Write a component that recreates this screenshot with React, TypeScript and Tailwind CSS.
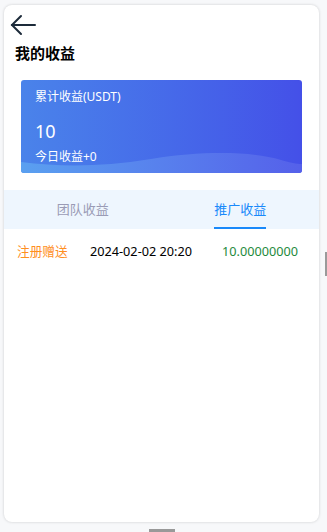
export default function App() {
  const tabs = ['团队收益', '推广收益']
  const active = 1

  return (
    <div
      className="relative w-[327px] h-[532px] bg-[#f7f8fa] overflow-hidden"
      style={{ fontFamily: '"Noto Sans", "Noto Sans CJK SC", sans-serif' }}
    >
      <div className="absolute left-[4px] top-[5px] w-[315px] h-[517px] bg-white rounded-[8px] shadow-[0_0_3px_rgba(0,0,0,0.18)] overflow-hidden">
        <div className="pl-[6px] pt-[9px] h-[32px]">
          <svg width="26" height="22" viewBox="0 0 26 22" fill="none" stroke="#1d2b3a" strokeWidth="2" strokeLinecap="round">
            <path d="M25 11H2" />
            <path d="M11 2L2 11L11 20" />
          </svg>
        </div>
        <div className="pl-[11px] pt-[6px] text-[15px] leading-[21px] font-bold text-black">我的收益</div>

        <div className="mx-[17px] mt-[16px] h-[93px] rounded-[3px] relative overflow-hidden bg-gradient-to-r from-[#4a83ea] to-[#4450e8]">
          <svg className="absolute left-0 bottom-0" width="282" height="30" viewBox="0 0 282 30" preserveAspectRatio="none">
            <defs>
              <linearGradient id="w" x1="0" x2="1" y1="0" y2="0">
                <stop offset="0" stopColor="#5aa0f0" />
                <stop offset="1" stopColor="#5560ea" />
              </linearGradient>
            </defs>
            <path d="M0 19 C40 24 80 24 130 16 C180 8 230 8 260 17 C270 20 276 21 282 21 V30 H0 Z" fill="url(#w)" />
          </svg>
          <div className="relative px-[14px] pt-[9px] text-white">
            <div className="text-[12px] leading-[16px]">累计收益(USDT)</div>
            <div className="mt-[15px] text-[18px] leading-[22px]">10</div>
            <div className="mt-[7px] text-[12px] leading-[16px]">今日收益+0</div>
          </div>
        </div>

        <div className="mt-[17px] h-[39px] bg-[#eef6fe] flex">
          {tabs.map((t, i) => (
            <div key={t} className="flex-1 flex justify-center">
              <div
                className={`relative h-full flex items-center text-[13px] ${
                  i === active ? 'text-[#1989fa]' : 'text-[#9a9bb5]'
                }`}
              >
                {t}
                {i === active && <div className="absolute left-0 right-0 bottom-0 h-[2px] bg-[#1989fa]" />}
              </div>
            </div>
          ))}
        </div>

        <div className="flex items-center h-[46px] text-[12.7px] pl-[13px] pr-[21px]">
          <div className="text-[#ff8f1f] w-[73px]">注册赠送</div>
          <div className="text-black">2024-02-02 20:20</div>
          <div className="ml-auto text-[#1e8a3c]">10.00000000</div>
        </div>
      </div>

      <div className="absolute right-0 top-[252px] w-[2px] h-[24px] bg-[#9a9a9a]" />
      <div className="absolute left-[149px] bottom-0 w-[26px] h-[3px] bg-[#999]" />
    </div>
  )
}
